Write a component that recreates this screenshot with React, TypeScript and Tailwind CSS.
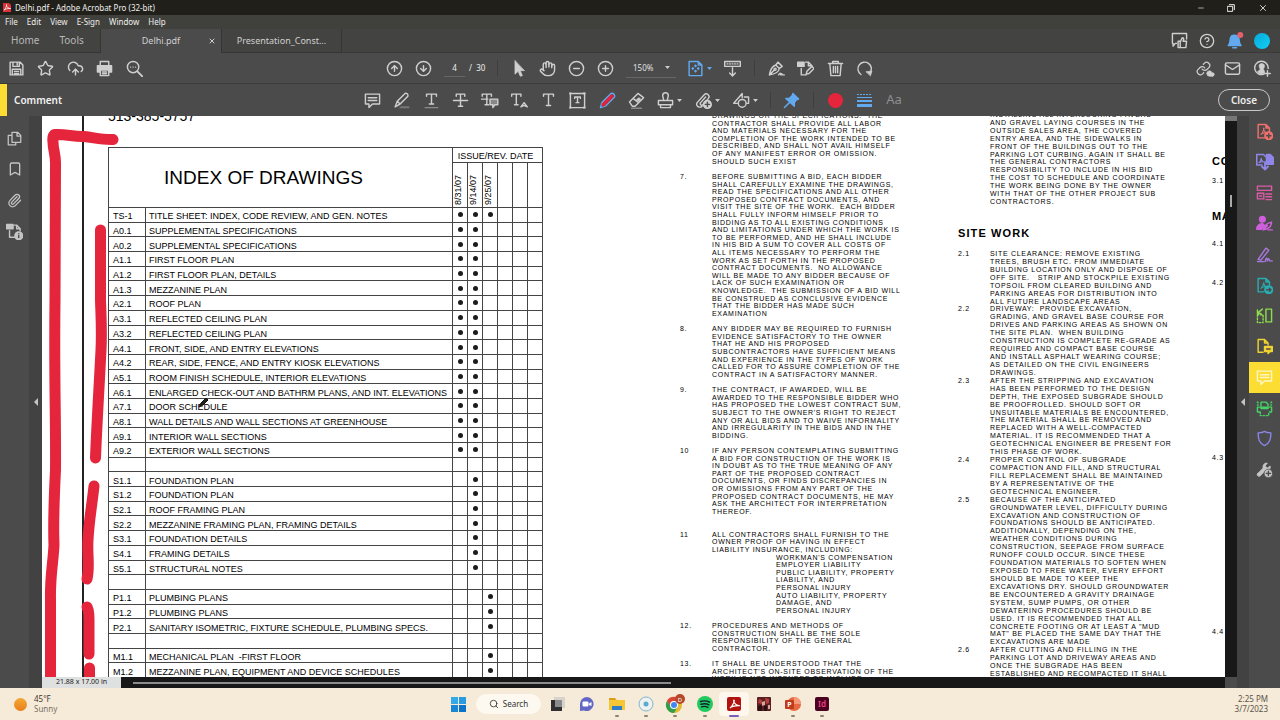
import type { ReactNode } from "react";
import {
  Bookmark, Cloud, CloudUpload, CircleArrowDown, CircleArrowUp, CircleHelp, CircleMinus, CirclePlus,
  Hand, Link, Mail, Minus, Paperclip, Search, Star, X,
} from "lucide-react";

/* ---------- icon helpers ---------- */

function Svg({ children, className = "size-[17px]", sw = 2 }: { children: ReactNode; className?: string; sw?: number }) {
  return (
    <svg viewBox="0 0 24 24" className={className} fill="none" stroke="currentColor" strokeWidth={sw} strokeLinecap="round" strokeLinejoin="round" aria-hidden="true">
      {children}
    </svg>
  );
}

const Caret = () => (
  <svg viewBox="0 0 8 5" className="h-[3px] w-[5px] shrink-0" fill="currentColor" aria-hidden="true"><path d="M0 0h8L4 5z" /></svg>
);
const PaneArrow = () => (
  <svg viewBox="0 0 4 8" className="h-[8px] w-[4px]" fill="currentColor" aria-hidden="true"><path d="M4 0v8L0 4z" /></svg>
);

const SaveIcon = () => (
  <Svg><path d="M3 3h14l4 4v14H3zM7 3v6h9V3M13 4v3M6 21v-8h12v8M9 16h6M9 19h6" /></Svg>
);
const PrintIcon = () => (
  <Svg><path d="M6 7V2h12v5" /><path d="M2 8h20v9h-4v-4H6v4H2z" fill="currentColor" /><path d="M6 14h12v8H6zM9 17h6M9 19.500h6" /></Svg>
);
const FindIcon = () => (
  <Svg><circle cx="10" cy="10" r="8" /><path d="M16 16l7 7" strokeWidth="2.6" /><path d="M6.500 10h.1M10 10h.1M13.500 10h.1" /></Svg>
);
const CursorIcon = () => (
  <Svg><path d="M7 1v19l4.500-4 3 7 3-1-3-7h5.500z" fill="currentColor" strokeWidth="1" /></Svg>
);
const FitIcon = () => (
  <Svg><path d="M3 2h13l5 5v15H3zM16 2v5h5" /><path d="M12 7v2.500M12 14.500V17M7 12h2.500M14.500 12H17M10.500 8.500L12 7l1.500 1.500M10.500 15.500L12 17l1.500-1.500M8.500 10.500L7 12l1.500 1.500M15.500 10.500L17 12l-1.500 1.500" strokeWidth="1.500" /></Svg>
);
const ScrollPageIcon = () => (
  <Svg><path d="M1 2h22v7H1z" /><path d="M4.500 5.500h15" strokeDasharray="1 2.500" /><path d="M12 11v11M8 18.500l4 4 4-4" /></Svg>
);
const FountainPenIcon = () => (
  <Svg><path d="M2 21C3 15 5 9 11 7l5 5c-1 6-6 8-14 9zM2 21l7-7M11 7l3-4 6 6-4 3" /><circle cx="10" cy="13" r="1.500" /><path d="M15 21c2-3 3-3 3 0 1-2 2-2 2 0h3" /></Svg>
);
const EditPageIcon = () => (
  <Svg><path d="M1 3h9v6H1z" fill="currentColor" /><path d="M12 3h4l5 5M6 12v9h7M16 3v5h5" /><path d="M13 20l1-4 7-7 3 3-7 7z" /></Svg>
);
const TrashIcon = () => (
  <Svg><path d="M2 5h20M8 5V2h8v3M4 5l1.500 17h13L20 5M9 9v9M12 9v9M15 9v9" /></Svg>
);
const RotateIcon = () => (
  <Svg><path d="M7 20.500A9.500 9.500 0 1 1 20 18" /><path d="M14.500 16.500l8-1-2 6.500z" fill="currentColor" strokeWidth="1" /></Svg>
);
const NoteIcon = () => (
  <Svg><path d="M2 3h20v14H12l-5 5v-5H2zM6 8h12M6 12h12" /></Svg>
);
const HighlightIcon = () => (
  <Svg><path d="M11 20h12v3H8z" fill="#777" stroke="none" /><path d="M3 21l3-8L17 2c2-1 5 1 4 4L10 17zM6 13l4 4M3 21l5-3" /></Svg>
);
const UnderlineIcon = () => (<Svg><path d="M5 6V3h14v3M12 3v14M9 17h6" /><path d="M3 22h18" stroke="#8a8a8a" /></Svg>);
const StrikeIcon = () => (<Svg><path d="M6 6V3h12v3M12 3v17M9 20h6M2 12h20" /></Svg>);
const ReplaceTextIcon = () => (
  <Svg className="h-[17px] w-[18px]"><path d="M1 6V3h13v3M7.500 3v15M5 18h5M0 10h9" /><path d="M12 10h11v8h-4l-3 4v-4h-4z" fill="#888" /></Svg>
);
const InsertTextIcon = () => (<Svg><path d="M1 6V3h13v3M7.500 3v15M5 18h5" /><path d="M14 21l4.500-6 4.500 6-4.500-2z" /></Svg>);
const TextIcon = () => (<Svg><path d="M5 6V3h14v3M12 3v16M9 19h6" /></Svg>);
const TextBoxIcon = () => (
  <Svg><path d="M2 2h20v20H2z" /><path d="M1 1h2v2H1zM21 1h2v2h-2zM1 21h2v2H1zM21 21h2v2h-2z" strokeWidth="1" /><path d="M8 9V7h8v2M12 7v8M10 15h4" /></Svg>
);
const PencilIcon = () => (
  <Svg><path d="M2 22l2-7L17 2c3-1 6 2 5 5L9 20z" stroke="#62a9ef" fill="#4b4b4b" /><path d="M6 18L18 6" stroke="#e3223a" strokeWidth="5" /></Svg>
);
const EraserIcon = () => (
  <Svg><path d="M2 14L14 2l8 6-12 12H6zM7 9l8 6" /><path d="M12 11l3-3 3 2-3 3z" fill="currentColor" strokeWidth="1" /><path d="M5 23h14" stroke="#888" /></Svg>
);
const StampIcon = () => (
  <Svg><path d="M9 12c1-3-1-4-1-7a4 4 0 0 1 8 0c0 3-2 4-1 7M2 12h20v6H2zM5 22h14M5 18v4M19 18v4" /></Svg>
);
const AttachIcon = () => (
  <Svg><path d="M10 20c-3 3-10 0-7-5L13 4c3-4 9 1 6 5L11 18c-2 2-5-1-3-3l7-8" /><circle cx="17.500" cy="17.500" r="5.500" fill="currentColor" /><path d="M17.500 14.500v6M14.500 17.500h6" stroke="#4b4b4b" /></Svg>
);
const ShapesIcon = () => (
  <Svg><path d="M7 16H1L13 2v6" /><circle cx="13" cy="16" r="5.500" /><path d="M16 7h6v9h-3" /></Svg>
);
const PinIcon = () => (
  <Svg><path d="M14 2l8 8-3 1-3 4v5L4 9h5l4-4zM9 15l-7 7" fill="currentColor" /></Svg>
);
const LinesIcon = () => (
  <svg viewBox="0 0 15 14" className="h-[14px] w-[15px]" aria-hidden="true">
    <path d="M0 1.500h15" stroke="#62a9ef" strokeWidth="1" strokeDasharray="2 1" />
    <path d="M0 4.500h15" stroke="#62a9ef" strokeWidth="1" /><path d="M0 8h15" stroke="#62a9ef" strokeWidth="2" /><path d="M0 12.500h15" stroke="#62a9ef" strokeWidth="3" />
  </svg>
);
const FeedbackIcon = () => (
  <Svg><path d="M8 16H6l-3 4v-4H2V2h20v8" /><path d="M10 13h3v9h-3zM13 14l3-6c3 0 2 3 1 5h5l-1 9h-8" fill="#434341" /></Svg>
);
const BellIcon = () => (
  <Svg className="size-[18px]"><path d="M3 18c3-2 2-6 3-10 1-5 9-5 11 0 1 4 0 8 3 10z" fill="#62a9ef" stroke="#62a9ef" /><path d="M9 21h5" stroke="#62a9ef" /><circle cx="19" cy="4" r="4" fill="#e5606b" stroke="none" /></Svg>
);
const PersonAddIcon = () => (
  <Svg><path d="M14 20a9.500 9.500 0 1 1 6-8" /><path d="M5 17c1-2 3-3 4-4-3-4-2-8 2-8s5 4 2 8c1 1 2 2 2 5-4 3-7 2-10-1z" fill="currentColor" strokeWidth="1" /><path d="M19 15v8M15 19h8" /></Svg>
);
const LinkCloudIcon = () => (
  <span className="relative flex"><Link className="size-[15px]" /><Cloud className="absolute -right-[4px] -bottom-[2px] size-[9px] fill-current" /></span>
);

/* side panes */
const PagesIcon = () => (<Svg className="size-[15px]"><path d="M8 2h9l5 5v11H8zM16 2v6h6M8 7H2v15h12v-4" /></Svg>);
const PageInfoIcon = () => (
  <Svg className="size-[17px]"><path d="M1 2h9v6H1z" fill="currentColor" /><path d="M12 3h3l5 5v3M5 11v9h7M15 3v5h5" /><circle cx="18" cy="18" r="5.500" fill="currentColor" /><path d="M18 17.500v3M18 15h.1" stroke="#4b4b4b" /></Svg>
);
const CreatePdfIcon = () => (
  <Svg><path d="M3 2h11l5 5v5M12 21H3V2M14 2v5h5" /><path d="M7 16c3-2 5-9 4-9s0 7 5 7-7-1-9 2z" strokeWidth="1.500" /><circle cx="18" cy="18" r="5.500" fill="currentColor" /><path d="M18 15v6M15 18h6" stroke="#4b4b4b" /></Svg>
);
const CombineIcon = () => (
  <Svg className="size-[18px]"><path d="M8 16H1V2h9l3 3" /><path d="M4 13c2-1 3-6 3-6s0 4 3 5c-3-1-4 0-6 1z" strokeWidth="1.500" /><path d="M14 2h5l4 4v9h-9z" fill="currentColor" /><path d="M12 12v9M8 18l4 4 4-4" strokeWidth="2.500" /></Svg>
);
const OrganizeIcon = () => (<Svg><path d="M2 3h20v6H2zM2 13h9v8H2zM14 14h8M14 18h8M14 22h8M5 17h3" /></Svg>);
const RequestSignIcon = () => (
  <Svg><circle cx="9" cy="6" r="4" fill="currentColor" /><path d="M1 20c0-6 4-7 8-8l3 3-4 5z" fill="currentColor" /><path d="M10 21c2-7 5-10 12-11 0 6-4 10-12 11zM10 21l6-6M17 21h6" /></Svg>
);
const FillSignIcon = () => (<Svg><path d="M3 19L14 3l4 3L7 20zM2 22h9M13 22c1-6 3-6 3-1 1-4 3-4 3 0h4" /></Svg>);
const ExportIcon = () => (
  <Svg><path d="M3 2h11l5 5v4M11 21H3V2M14 2v5h5" /><path d="M7 16c3-2 4-8 4-8s0 5 4 6c-4-1-6 0-8 2z" strokeWidth="1.500" /><circle cx="18" cy="18" r="5.500" fill="currentColor" /><path d="M15 18h6M19 16l2 2-2 2" stroke="#4b4b4b" /></Svg>
);
const ComparePagesIcon = () => (
  <Svg><path d="M14 3h8v18h-8z" /><path d="M2 11h8v11H2z" strokeDasharray="2 2.500" /><path d="M9 3L3 8M2 4v5h5" /></Svg>
);
const SendCommentsIcon = () => (
  <Svg><path d="M10 20H3V2h9l5 5v3M12 2v5h5" /><path d="M12 12h11v7h-3l-3 3v-3h-5z" fill="currentColor" /><path d="M15 15.500h5" stroke="#4b4b4b" /></Svg>
);
const ScanIcon = () => (
  <Svg><path d="M7 8V3h7l3 3v2M2 10h20v7h-3M5 17H2v-7M7 12h10" /><path d="M6 17v5h12v-5" strokeDasharray="2 2.500" /><path d="M2 3l1 1M22 3l-1 1M2 7h1M21 7h1" /></Svg>
);
const ShieldIcon = () => (<Svg><path d="M12 2c3 2 5 2 9 2 0 9-1 14-9 18C4 18 3 13 3 4c4 0 6 0 9-2z" /></Svg>);
const ToolsIcon = () => (
  <Svg><path d="M2 18l8-8c-1-4 2-8 6-7l-3 4 3 3 4-3c1 4-2 7-6 6l-8 8c-2 2-6-1-4-3z" fill="currentColor" strokeWidth="1" /><circle cx="17.500" cy="17.500" r="6" fill="currentColor" stroke="#4b4b4b" strokeWidth="1" /><path d="M17.500 14.500v6M14.500 17.500h6" stroke="#4b4b4b" /></Svg>
);

/* ---------- shared controls ---------- */

function IconButton({ label, children, className = "w-[29px]" }: { label: string; children: ReactNode; className?: string }) {
  return (
    <button type="button" aria-label={label} className={`flex h-6 shrink-0 items-center justify-center gap-[3px] ${className}`}>
      {children}
    </button>
  );
}

const Divider = () => <span className="h-[16px] w-px bg-[#3e3e3e]" />;

/* ---------- document data ---------- */

type IndexRow = [code: string, title: string, dots: string];
const indexRows: IndexRow[] = [
  ["TS-1", "TITLE SHEET: INDEX, CODE REVIEW, AND GEN. NOTES", "111"],
  ["A0.1", "SUPPLEMENTAL SPECIFICATIONS", "11"],
  ["A0.2", "SUPPLEMENTAL SPECIFICATIONS", "11"],
  ["A1.1", "FIRST FLOOR PLAN", "11"],
  ["A1.2", "FIRST FLOOR PLAN, DETAILS", "11"],
  ["A1.3", "MEZZANINE PLAN", "11"],
  ["A2.1", "ROOF PLAN", "11"],
  ["A3.1", "REFLECTED CEILING PLAN", "11"],
  ["A3.2", "REFLECTED CEILING PLAN", "11"],
  ["A4.1", "FRONT, SIDE, AND ENTRY ELEVATIONS", "11"],
  ["A4.2", "REAR, SIDE, FENCE, AND ENTRY KIOSK ELEVATIONS", "11"],
  ["A5.1", "ROOM FINISH SCHEDULE, INTERIOR ELEVATIONS", "11"],
  ["A6.1", "ENLARGED CHECK-OUT AND BATHRM PLANS, AND INT. ELEVATIONS", "11"],
  ["A7.1", "DOOR SCHEDULE", "11"],
  ["A8.1", "WALL DETAILS AND WALL SECTIONS AT GREENHOUSE", "11"],
  ["A9.1", "INTERIOR WALL SECTIONS", "11"],
  ["A9.2", "EXTERIOR WALL SECTIONS", "11"],
  ["", "", ""],
  ["S1.1", "FOUNDATION PLAN", "01"],
  ["S1.2", "FOUNDATION PLAN", "01"],
  ["S2.1", "ROOF FRAMING PLAN", "01"],
  ["S2.2", "MEZZANINE FRAMING PLAN, FRAMING DETAILS", "01"],
  ["S3.1", "FOUNDATION DETAILS", "01"],
  ["S4.1", "FRAMING DETAILS", "01"],
  ["S5.1", "STRUCTURAL NOTES", "01"],
  ["", "", ""],
  ["P1.1", "PLUMBING PLANS", "001"],
  ["P1.2", "PLUMBING PLANS", "001"],
  ["P2.1", "SANITARY ISOMETRIC, FIXTURE SCHEDULE, PLUMBING SPECS.", "001"],
  ["", "", ""],
  ["M1.1", "MECHANICAL PLAN  -FIRST FLOOR", "001"],
  ["M1.2", "MEZZANINE PLAN, EQUIPMENT AND DEVICE SCHEDULES", "001"],
];

type Clause = { no: string; text: string };

const bidClauses: Clause[] = [
  { no: "", text: `DRAWINGS OR THE SPECIFICATIONS.  THE
CONTRACTOR SHALL PROVIDE ALL LABOR
AND MATERIALS NECESSARY FOR THE
COMPLETION OF THE WORK INTENDED TO BE
DESCRIBED, AND SHALL NOT AVAIL HIMSELF
OF ANY MANIFEST ERROR OR OMISSION.
SHOULD SUCH EXIST
` },
  { no: "7.", text: `BEFORE SUBMITTING A BID, EACH BIDDER
SHALL CAREFULLY EXAMINE THE DRAWINGS,
READ THE SPECIFICATIONS AND ALL OTHER
PROPOSED CONTRACT DOCUMENTS, AND
VISIT THE SITE OF THE WORK.  EACH BIDDER
SHALL FULLY INFORM HIMSELF PRIOR TO
BIDDING AS TO ALL EXISTING CONDITIONS
AND LIMITATIONS UNDER WHICH THE WORK IS
TO BE PERFORMED, AND HE SHALL INCLUDE
IN HIS BID A SUM TO COVER ALL COSTS OF
ALL ITEMS NECESSARY TO PERFORM THE
WORK AS SET FORTH IN THE PROPOSED
CONTRACT DOCUMENTS.  NO ALLOWANCE
WILL BE MADE TO ANY BIDDER BECAUSE OF
LACK OF SUCH EXAMINATION OR
KNOWLEDGE.  THE SUBMISSION OF A BID WILL
BE CONSTRUED AS CONCLUSIVE EVIDENCE
THAT THE BIDDER HAS MADE SUCH
EXAMINATION
` },
  { no: "8.", text: `ANY BIDDER MAY BE REQUIRED TO FURNISH
EVIDENCE SATISFACTORY TO THE OWNER
THAT HE AND HIS PROPOSED
SUBCONTRACTORS HAVE SUFFICIENT MEANS
AND EXPERIENCE IN THE TYPES OF WORK
CALLED FOR TO ASSURE COMPLETION OF THE
CONTRACT IN A SATISFACTORY MANNER.
` },
  { no: "9.", text: `THE CONTRACT, IF AWARDED, WILL BE
AWARDED TO THE RESPONSIBLE BIDDER WHO
HAS PROPOSED THE LOWEST CONTRACT SUM,
SUBJECT TO THE OWNER'S RIGHT TO REJECT
ANY OR ALL BIDS AND TO WAIVE INFORMALITY
AND IRREGULARITY IN THE BIDS AND IN THE
BIDDING.
` },
  { no: "10", text: `IF ANY PERSON CONTEMPLATING SUBMITTING
A BID FOR CONSTRUCTION OF THE WORK IS
IN DOUBT AS TO THE TRUE MEANING OF ANY
PART OF THE PROPOSED CONTRACT
DOCUMENTS, OR FINDS DISCREPANCIES IN
OR OMISSIONS FROM ANY PART OF THE
PROPOSED CONTRACT DOCUMENTS, HE MAY
ASK THE ARCHITECT FOR INTERPRETATION
THEREOF.

` },
  { no: "11", text: `ALL CONTRACTORS SHALL FURNISH TO THE
OWNER PROOF OF HAVING IN EFFECT
LIABILITY INSURANCE, INCLUDING:
\tWORKMAN'S COMPENSATION
\tEMPLOYER LIABILITY
\tPUBLIC LIABILITY, PROPERTY
\tLIABILITY, AND
\tPERSONAL INJURY
\tAUTO LIABILITY, PROPERTY
\tDAMAGE, AND
\tPERSONAL INJURY
` },
  { no: "12.", text: `PROCEDURES AND METHODS OF
CONSTRUCTION SHALL BE THE SOLE
RESPONSIBILITY OF THE GENERAL
CONTRACTOR.
` },
  { no: "13.", text: `IT SHALL BE UNDERSTOOD THAT THE
ARCHITECT'S ON-SITE OBSERVATION OF THE
WORK IS NOT INTENDED TO INCLUDE` },
];

const pavingClauses: Clause[] = [
  { no: "", text: `INSTALLING ALL INTERLOCKING PAVERS
AND GRAVEL LAYING COURSES IN THE
OUTSIDE SALES AREA, THE COVERED
ENTRY AREA, AND THE SIDEWALKS IN
FRONT OF THE BUILDINGS OUT TO THE
PARKING LOT CURBING. AGAIN IT SHALL BE
THE GENERAL CONTRACTORS
RESPONSIBILITY TO INCLUDE IN HIS BID
THE COST TO SCHEDULE AND COORDINATE
THE WORK BEING DONE BY THE OWNER
WITH THAT OF THE OTHER PROJECT SUB
CONTRACTORS.` },
];

const siteClauses: Clause[] = [
  { no: "2.1", text: `SITE CLEARANCE: REMOVE EXISTING
TREES, BRUSH ETC. FROM IMMEDIATE
BUILDING LOCATION ONLY AND DISPOSE OF
OFF SITE.   STRIP AND STOCKPILE EXISTING
TOPSOIL FROM CLEARED BUILDING AND
PARKING AREAS FOR DISTRIBUTION INTO
ALL FUTURE LANDSCAPE AREAS` },
  { no: "2.2", text: `DRIVEWAY:  PROVIDE EXCAVATION,
GRADING, AND GRAVEL BASE COURSE FOR
DRIVES AND PARKING AREAS AS SHOWN ON
THE SITE PLAN.  WHEN BUILDING
CONSTRUCTION IS COMPLETE RE-GRADE AS
REQUIRED AND COMPACT BASE COURSE
AND INSTALL ASPHALT WEARING COURSE;
AS DETAILED ON THE CIVIL ENGINEERS
DRAWINGS.` },
  { no: "2.3", text: `AFTER THE STRIPPING AND EXCAVATION
HAS BEEN PERFORMED TO THE DESIGN
DEPTH, THE EXPOSED SUBGRADE SHOULD
BE PROOFROLLED. SHOULD SOFT OR
UNSUITABLE MATERIALS BE ENCOUNTERED,
THE MATERIAL SHALL BE REMOVED AND
REPLACED WITH A WELL-COMPACTED
MATERIAL. IT IS RECOMMENDED THAT A
GEOTECHNICAL ENGINEER BE PRESENT FOR
THIS PHASE OF WORK.` },
  { no: "2.4", text: `PROPER CONTROL OF SUBGRADE
COMPACTION AND FILL, AND STRUCTURAL
FILL REPLACEMENT SHALL BE MAINTAINED
BY A REPRESENTATIVE OF THE
GEOTECHNICAL ENGINEER.` },
  { no: "2.5", text: `BECAUSE OF THE ANTICIPATED
GROUNDWATER LEVEL, DIFFICULTY DURING
EXCAVATION AND CONSTRUCTION OF
FOUNDATIONS SHOULD BE ANTICIPATED.
ADDITIONALLY, DEPENDING ON THE,
WEATHER CONDITIONS DURING
CONSTRUCTION, SEEPAGE FROM SURFACE
RUNOFF COULD OCCUR. SINCE THESE
FOUNDATION MATERIALS TO SOFTEN WHEN
EXPOSED TO FREE WATER, EVERY EFFORT
SHOULD BE MADE TO KEEP THE
EXCAVATIONS DRY. SHOULD GROUNDWATER
BE ENCOUNTERED A GRAVITY DRAINAGE
SYSTEM, SUMP PUMPS, OR OTHER
DEWATERING PROCEDURES SHOULD BE
USED. IT IS RECOMMENDED THAT ALL
CONCRETE FOOTING OR AT LEAST A "MUD
MAT" BE PLACED THE SAME DAY THAT THE
EXCAVATIONS ARE MADE` },
  { no: "2.6", text: `AFTER CUTTING AND FILLING IN THE
PARKING LOT AND DRIVEWAY AREAS AND
ONCE THE SUBGRADE HAS BEEN
ESTABLISHED AND RECOMPACTED IT SHALL` },
];

function ClauseList({ clauses, className }: { clauses: Clause[]; className: string }) {
  return (
    <ol className={`grid auto-rows-fr text-[7px] leading-[7px] tracking-widest whitespace-pre text-black ${className}`}>
      {clauses.map(({ no, text }, i) => {
        const lines = text.split("\n");
        return (
          <li key={i} className="flex" style={{ gridRow: `span ${lines.length}` }}>
            <span className="w-8 shrink-0">{no}</span>
            <span className="grid auto-rows-fr">
              {lines.map((line, j) => (
                <span key={j} className={line.startsWith("\t") ? "pl-16" : ""}>{line.trimStart()}</span>
              ))}
            </span>
          </li>
        );
      })}
    </ol>
  );
}

function DrawingIndex() {
  const line = "border border-[#444]";
  return (
    <table className="h-[531px] w-[435px] table-fixed border-collapse text-[9px] leading-[10px] text-black">
      <colgroup>
        <col className="w-[37px]" /><col />
        {[0, 1, 2, 3, 4, 5].map((c) => <col key={c} className="w-[15px]" />)}
      </colgroup>
      <thead>
        <tr className="h-[15px]">
          <th colSpan={2} rowSpan={2} className={`${line} pr-[34px] text-center text-[19px] leading-6 font-normal`}>INDEX OF DRAWINGS</th>
          <th colSpan={6} className={`${line} p-0 pt-[2px] pr-[4px] font-normal`}>ISSUE/REV. DATE</th>
        </tr>
        <tr className="h-[45px]">
          {["8/31/07", "9/14/07", "9/25/07", "", "", ""].map((d, i) => (
            <th key={i} scope="col" className={`${line} p-0 pb-[2px] align-bottom font-normal`}>
              <span className="mx-auto block w-[10px] rotate-180 [writing-mode:vertical-rl]">{d}</span>
            </th>
          ))}
        </tr>
      </thead>
      <tbody>
        {indexRows.map(([code, title, dots], r) => (
          <tr key={r}>
            <td className={`${line} p-0 pt-[3px] pl-1`}>{code || "\u00a0"}</td>
            <td className={`${line} p-0 pt-[3px] pl-[3px] whitespace-pre`}>{title}</td>
            {[0, 1, 2, 3, 4, 5].map((c) => (
              <td key={c} className={`${line} p-0`}>
                {dots[c] === "1" && <span className="mx-auto block size-[5px] rounded-full bg-[#1c1c1c]" />}
              </td>
            ))}
          </tr>
        ))}
      </tbody>
    </table>
  );
}

function Markup() {
  return (
    <svg className="pointer-events-none absolute top-0 left-0" width="170" height="561" viewBox="42 116 170 561" fill="none" aria-hidden="true">
      <g stroke="#e4253c" strokeWidth="11" strokeLinecap="round" strokeLinejoin="round">
        <path d="M113 139.500C103 140 96 138 84 136.500C74 137 66 134 56 134.500Q52 134 53 142C53 150 56 155 55.500 165L55 300C54 380 56 420 55.500 470C54 500 53 520 54 545C53 565 50 575 50.500 600L50.500 690" />
        <path d="M100.500 230V300C101 318 102 330 101 350C99 390 97 420 95.500 458" />
        <path d="M94 486C92 505 89 520 88 540C87 556 90 566 87 579" />
        <path d="M87 607Q89 609 89 620V654" />
        <path d="M89.500 668V690" />
      </g>
      <path d="M199 407l2-4 5-5 2 2-5 5z" fill="#222" stroke="#111" strokeWidth="1" />
    </svg>
  );
}

function Sheet() {
  return (
    <div className="relative flex min-h-0 flex-1 overflow-hidden bg-white">
      <div className="w-[42px] shrink-0 border-r-2 border-[#222]" />
      <div className="ml-6 shrink-0">
        <p className="-mt-[8px] h-[39px] text-[14px] leading-[16px] text-black">513-385-5757</p>
        <DrawingIndex />
      </div>
      <ClauseList clauses={bidClauses} className="-mt-1 ml-[137px] h-[571px] w-[278px] shrink-0" />
      <div className="-mt-[5px] w-[254px] shrink-0">
        <ClauseList clauses={pavingClauses} className="h-[95px]" />
        <h2 className="flex h-[44px] items-center pt-[10px] text-[11px] font-bold tracking-widest text-black">SITE WORK</h2>
        <ClauseList clauses={siteClauses} className="h-[428px]" />
      </div>
      <div className="flex shrink-0 flex-col pt-[38px] text-[7px] leading-[8px] tracking-widest text-black">
        <b className="text-[11px] leading-[14px] text-black">CO</b>
        <span className="mt-[9px]">3.1</span>
        <b className="mt-[24px] text-[11px] leading-[14px] text-black">MA</b>
        <span className="mt-[17px]">4.1</span>
        <span className="mt-[31px]">4.2</span>
        <span className="mt-[167px]">4.3</span>
        <span className="mt-[166px]">4.4</span>
      </div>
      <Markup />
    </div>
  );
}

/* ---------- application chrome ---------- */

function TitleBar() {
  return (
    <div className="flex h-[15px] items-center bg-[#201f1a] pl-[3px] text-[8px] text-[#eee]">
      <svg viewBox="0 0 16 18" className="h-[9px] w-[8px]" aria-hidden="true"><path d="M0 0h12l4 4v14H0z" fill="#d8323a" /><path d="M2 14c4-2 6-11 5-11s1 8 7 8-7-1-12 3z" stroke="#fff" strokeWidth="1.5" fill="none" /></svg>
      <span className="ml-[4px]">Delhi.pdf - Adobe Acrobat Pro (32-bit)</span>
      <div className="ml-auto flex">
        <IconButton label="Minimize" className="w-[30px]"><Minus className="size-[8px]" /></IconButton>
        <IconButton label="Restore" className="w-[30px]">
          <Svg className="size-[8px]" sw={3}><path d="M2 7h15v15H2zM7 2h15v15" /></Svg>
        </IconButton>
        <IconButton label="Close window" className="w-[34px]"><X className="size-[10px]" /></IconButton>
      </div>
    </div>
  );
}

function MenuBar() {
  return (
    <nav className="flex h-[14px] items-center gap-[9px] bg-[#40403c] pl-[5px] text-[8px] text-[#eee]">
      {["File", "Edit", "View", "E-Sign", "Window", "Help"].map((m) => <button key={m} type="button">{m}</button>)}
    </nav>
  );
}

function TabBar() {
  return (
    <div className="flex h-6 bg-[#434341] text-[9px] text-[#d0d0d0]">
      <div className="flex w-[101px] items-center gap-5 border-r border-b border-[#353533] pl-[11px] text-[10px] text-[#b8b8b8]">
        <button type="button">Home</button>
        <button type="button">Tools</button>
      </div>
      <div className="relative flex w-[120px] items-center justify-center bg-[#4b4b4b]">
        <button type="button">Delhi.pdf</button>
        <button type="button" aria-label="Close tab" className="absolute right-[5px]"><X className="size-[8px]" strokeWidth={3} /></button>
      </div>
      <div className="flex w-[121px] items-center justify-center border-r border-b border-l border-[#353533]">
        <button type="button">Presentation_Const...</button>
      </div>
      <div className="flex flex-1 items-center justify-end border-b border-[#3a3a38] pr-1">
        <IconButton label="Feedback" className="w-[28px]"><FeedbackIcon /></IconButton>
        <IconButton label="Help" className="w-[28px]"><CircleHelp className="size-[16px]" /></IconButton>
        <IconButton label="Notifications" className="w-[27px]"><BellIcon /></IconButton>
        <IconButton label="Account" className="w-[28px]"><span className="size-[16px] rounded-full bg-linear-to-br from-[#08a9d8] to-[#10d0f5]" /></IconButton>
      </div>
    </div>
  );
}

function MainToolbar() {
  return (
    <div className="flex h-[31px] items-center border-b border-[#3c3c3c] bg-[#4b4b4b] text-[#cfcfcf]">
      <div className="flex w-[380px] items-center pl-[2px]">
        <IconButton label="Save"><SaveIcon /></IconButton>
        <IconButton label="Star"><Star className="size-[17px]" /></IconButton>
        <IconButton label="Upload" className="w-[30px]"><CloudUpload className="size-[17px]" /></IconButton>
        <IconButton label="Print"><PrintIcon /></IconButton>
        <IconButton label="Find" className="w-[30px]"><FindIcon /></IconButton>
      </div>
      <IconButton label="Previous page"><CircleArrowUp className="size-[17px]" /></IconButton>
      <IconButton label="Next page"><CircleArrowDown className="size-[17px]" /></IconButton>
      <input aria-label="Page number" defaultValue="4" className="ml-[6px] h-[18px] w-[21px] border-b border-[#666] bg-transparent text-center text-[8px] text-[#eee]" />
      <span className="ml-[4px] w-[28px] text-[8px] text-[#eee]">/&nbsp; 30</span>
      <Divider />
      <div className="ml-[6px] flex">
        <IconButton label="Select"><CursorIcon /></IconButton>
        <IconButton label="Pan"><Hand className="size-[17px]" /></IconButton>
        <IconButton label="Zoom out"><CircleMinus className="size-[17px]" /></IconButton>
        <IconButton label="Zoom in"><CirclePlus className="size-[17px]" /></IconButton>
      </div>
      <span className="relative ml-[6px] flex w-[50px] items-center border-b border-[#666]">
        <select aria-label="Zoom level" className="h-[18px] w-full appearance-none bg-transparent pl-[7px] text-[8px] text-[#e0e0e0]"><option>150%</option></select>
        <span className="pointer-events-none absolute right-[6px]"><Caret /></span>
      </span>
      <IconButton label="Fit page" className="ml-[8px] w-[30px] text-[#62a9ef]"><FitIcon /><Caret /></IconButton>
      <IconButton label="Scrolling mode" className="ml-[4px] w-[29px]"><ScrollPageIcon /></IconButton>
      <span className="mr-[7px] ml-[7px] flex"><Divider /></span>
      <IconButton label="Sign"><FountainPenIcon /></IconButton>
      <IconButton label="Edit page"><EditPageIcon /></IconButton>
      <IconButton label="Delete" className="w-[30px]"><TrashIcon /></IconButton>
      <IconButton label="Rotate" className="w-[28px]"><RotateIcon /></IconButton>
      <div className="ml-auto flex pr-[3px]">
        <IconButton label="Share link"><LinkCloudIcon /></IconButton>
        <IconButton label="Email"><Mail className="size-[17px]" /></IconButton>
        <IconButton label="Share with people" className="w-[30px]"><PersonAddIcon /></IconButton>
      </div>
    </div>
  );
}

function CommentToolbar() {
  return (
    <div className="flex h-8 items-center bg-[#4b4b4b] text-[#cfcfcf]">
      <div className="flex w-[358px] items-center self-stretch">
        <span className="w-[7px] self-stretch bg-[#fbdd34]" />
        <h1 className="ml-[7px] text-[10px] font-semibold text-[#f2f2f2]">Comment</h1>
      </div>
      <div className="flex w-[293px]">
        <IconButton label="Sticky note" className="flex-1"><NoteIcon /></IconButton>
        <IconButton label="Highlight" className="flex-1"><HighlightIcon /></IconButton>
        <IconButton label="Underline" className="flex-1"><UnderlineIcon /></IconButton>
        <IconButton label="Strikethrough" className="flex-1"><StrikeIcon /></IconButton>
        <IconButton label="Replace text" className="flex-1"><ReplaceTextIcon /></IconButton>
        <IconButton label="Insert text" className="flex-1"><InsertTextIcon /></IconButton>
        <IconButton label="Add text" className="flex-1"><TextIcon /></IconButton>
        <IconButton label="Text box" className="flex-1"><TextBoxIcon /></IconButton>
        <IconButton label="Draw" className="flex-1"><PencilIcon /></IconButton>
        <IconButton label="Erase" className="flex-1"><EraserIcon /></IconButton>
      </div>
      <div className="flex w-[113px]">
        <IconButton label="Stamp" className="flex-1"><StampIcon /><Caret /></IconButton>
        <IconButton label="Attach" className="flex-1"><AttachIcon /><Caret /></IconButton>
        <IconButton label="Shapes" className="flex-1"><ShapesIcon /><Caret /></IconButton>
      </div>
      <span className="mr-[6px] ml-[6px] flex"><Divider /></span>
      <IconButton label="Keep tool selected" className="w-[29px] text-[#62a9ef]"><PinIcon /></IconButton>
      <span className="mx-[7px] flex"><Divider /></span>
      <IconButton label="Color"><span className="size-[15px] rounded-full bg-[#e4253c]" /></IconButton>
      <IconButton label="Line thickness"><LinesIcon /></IconButton>
      <IconButton label="Text properties" className="w-[30px] text-[13px] text-[#8e8e8e]">Aa</IconButton>
      <button type="button" className="mr-[10px] ml-auto h-[22px] w-[52px] rounded-full border border-[#c8c8c8] text-[10px] font-semibold text-[#eee]">Close</button>
    </div>
  );
}

function LeftRail() {
  return (
    <aside className="flex shrink-0 text-[#c4c4c4]">
      <div className="flex w-[29px] flex-col items-center gap-[7px] bg-[#4b4b4b] pt-[10px]">
        <IconButton label="Pages"><PagesIcon /></IconButton>
        <IconButton label="Bookmarks"><Bookmark className="size-[16px]" /></IconButton>
        <IconButton label="Attachments"><Paperclip className="size-[15px]" /></IconButton>
        <IconButton label="Page info"><PageInfoIcon /></IconButton>
      </div>
      <button type="button" aria-label="Collapse pane" className="flex w-[13px] items-center justify-center bg-[#424242]"><PaneArrow /></button>
    </aside>
  );
}

const tools: [string, ReactNode, string][] = [
  ["Create PDF", <CreatePdfIcon />, "text-[#f0706c]"],
  ["Combine files", <CombineIcon />, "text-[#8f86e8]"],
  ["Organize pages", <OrganizeIcon />, "text-[#dc5ba6]"],
  ["Request signatures", <RequestSignIcon />, "text-[#cf5fdc]"],
  ["Fill and sign", <FillSignIcon />, "text-[#a878dc]"],
  ["Export PDF", <ExportIcon />, "text-[#28adb4]"],
  ["Compare", <ComparePagesIcon />, "text-[#8edc4c]"],
  ["Send for comments", <SendCommentsIcon />, "text-[#f0d330]"],
  ["Comment", <NoteIcon />, "bg-[#fbdd34] text-[#fff6c2]"],
  ["Scan", <ScanIcon />, "text-[#44d264]"],
  ["Protect", <ShieldIcon />, "text-[#8785e6]"],
  ["More tools", <ToolsIcon />, "text-[#c4c4c4]"],
];

function RightRail() {
  return (
    <aside className="flex shrink-0">
      <button type="button" aria-label="Collapse tools" className="flex w-[12px] items-center justify-center bg-[#424242] text-[#c4c4c4]"><PaneArrow /></button>
      <div className="w-[31px] bg-[#4b4b4b]">
        <div className="flex h-[369px] flex-col">
          {tools.map(([label, icon, tone]) => (
            <button key={label} type="button" aria-label={label} className={`flex flex-1 items-center justify-center ${tone}`}>{icon}</button>
          ))}
        </div>
      </div>
    </aside>
  );
}

function TaskApp({ label, running = false, active = false, children }: { label: string; running?: boolean; active?: boolean; children: ReactNode }) {
  return (
    <button type="button" aria-label={label} className={`relative flex h-[24px] flex-1 items-center justify-center rounded ${active ? "bg-[#fdf7ee]" : ""}`}>
      {children}
      {active && <span className="absolute -bottom-px h-[2px] w-[10px] rounded-full bg-[#7a5fc0]" />}
      {running && <span className="absolute -bottom-px h-[2px] w-[4px] rounded-full bg-[#8b8378]" />}
    </button>
  );
}

function Taskbar() {
  const box = "size-[16px]";
  return (
    <footer className="flex h-8 items-center bg-[#f6ead8] text-[8px] leading-[10px] text-[#3d3831]">
      <div className="flex w-[444px] items-center gap-[7px] pl-[14px]">
        <span className="size-[13px] rounded-full bg-linear-to-b from-[#f4a836] to-[#e97f17]" />
        <p>45°F<br /><span className="text-[#7a7266]">Sunny</span></p>
      </div>
      <button type="button" aria-label="Start" className="grid h-6 w-[29px] grid-cols-[7px_7px] grid-rows-[7px_7px] place-content-center gap-px">
        <i className="bg-[#33a9e8]" /><i className="bg-[#2a9be0]" /><i className="bg-[#1a87d4]" /><i className="bg-[#0b74c8]" />
      </button>
      <button type="button" className="ml-[3px] flex h-5 w-[65px] items-center justify-center gap-1 rounded-full bg-[#fdf8f0] text-[8px] text-[#333]">
        <Search className="size-[10px]" />Search
      </button>
      <div className="ml-[2px] flex w-[294px]">
        <TaskApp label="Task view"><svg viewBox="0 0 16 16" className={box}><path d="M4 1h11v11H4z" fill="#d6d3cc" /><path d="M1 4h11v11H1z" fill="#2f2f2f" /><path d="M5 4h7v7H5z" fill="#8b8b8b" /></svg></TaskApp>
        <TaskApp label="Chat"><svg viewBox="0 0 16 16" className={box}><path d="M8 1a7 7 0 1 1-3 13.500L1 15V8a7 7 0 0 1 7-7z" fill="#6266c4" /><rect x="3.500" y="5.500" width="6" height="5" rx="1" fill="#fff" /><path d="M10 7.500l2.500-1.500v4L10 9z" fill="#fff" /></svg></TaskApp>
        <TaskApp label="File Explorer" running><svg viewBox="0 0 16 16" className={box}><path d="M0 2h6l2 2h8v10H0z" fill="#f7c733" /><path d="M0 2h6l1 2H0z" fill="#dc9d1d" /><path d="M3 10h10v4H3z" fill="#2f7fc9" /></svg></TaskApp>
        <TaskApp label="Recorder" running><svg viewBox="0 0 16 16" className={box}><circle cx="8" cy="8" r="7" fill="#eef1ee" stroke="#7fb6cf" /><circle cx="8" cy="8" r="2.500" fill="#58acd2" /></svg></TaskApp>
        <TaskApp label="Chrome" running>
          <svg viewBox="0 0 20 20" className="size-[20px]"><circle cx="9" cy="11" r="8" fill="#e5b92e" /><path d="M2 7a8 8 0 0 1 14 0H9a4 4 0 0 0-3.500 6z" fill="#dc4437" /><path d="M2 7a8 8 0 0 0 7 12l3.500-6H6z" fill="#2f9e4f" /><circle cx="9" cy="11" r="4" fill="#fff" /><circle cx="9" cy="11" r="3" fill="#4285f4" /><circle cx="15" cy="5" r="5" fill="#b5482a" /><text x="15" y="7.500" fontSize="6" textAnchor="middle" fill="#fff">D</text></svg>
        </TaskApp>
        <TaskApp label="Spotify" running><svg viewBox="0 0 16 16" className={box}><circle cx="8" cy="8" r="8" fill="#22c95e" /><path d="M3.500 5.500q5-1.500 9 .7M4 8.200q4.500-1.200 8 .6M4.500 10.800q3.500-1 6.500.5" stroke="#123" strokeWidth="1.400" fill="none" strokeLinecap="round" /></svg></TaskApp>
        <TaskApp label="Acrobat" active><svg viewBox="0 0 16 16" className={box}><rect x="1" y="1" width="14" height="14" rx="2" fill="#b3130f" /><path d="M4 12c3-2 5-8 4-8s0 5 4.500 5.500S6 9 4 12z" stroke="#fff" strokeWidth="1.200" fill="none" /></svg></TaskApp>
        <TaskApp label="Game"><svg viewBox="0 0 16 16" className={box}><rect x="1" y="1" width="14" height="14" rx="1" fill="#5d1f22" /><path d="M3 3l3 1v4L2 7zM9 2l4 1v4l-3 1z" fill="#b4403e" /><path d="M2 10l4-1v6H2zM8 9l3 1v5H8z" fill="#2a1113" /><path d="M6 6l3-1v4l-3 1zM12 9h2v4h-2z" fill="#d6a79b" /></svg></TaskApp>
        <TaskApp label="PowerPoint" running><svg viewBox="0 0 16 16" className={box}><circle cx="9" cy="8" r="7" fill="#e56a43" /><path d="M9 1a7 7 0 0 1 7 7H9z" fill="#f39a7a" /><rect x="0" y="4" width="9" height="9" rx="1" fill="#c13b1b" /><text x="4.500" y="11" fontSize="7" fontWeight="700" textAnchor="middle" fill="#fff">P</text></svg></TaskApp>
        <TaskApp label="InDesign" running><svg viewBox="0 0 16 16" className={box}><rect x="1" y="1" width="14" height="14" rx="2" fill="#49021f" /><text x="8" y="11" fontSize="8" fontWeight="600" textAnchor="middle" fill="#f2418a">Id</text></svg></TaskApp>
      </div>
      <p className="ml-auto pr-3 text-right text-[#5b554c]">2:25 PM<br />3/7/2023</p>
    </footer>
  );
}

export default function App() {
  return (
    <div className="flex h-screen flex-col overflow-hidden bg-[#4b4b4b] font-['Noto_Sans','Open_Sans',sans-serif]">
      <header>
        <TitleBar />
        <MenuBar />
        <TabBar />
        <MainToolbar />
        <CommentToolbar />
      </header>
      <div className="flex min-h-0 flex-1">
        <LeftRail />
        <main className="flex min-w-0 flex-1 flex-col bg-[#181818] font-['Liberation_Sans',Arial,sans-serif]">
          <div className="flex min-h-0 flex-1">
            <Sheet />
            <div className="flex w-[12px] shrink-0 flex-col items-center bg-[#181818]">
              <span className="h-[5px] w-full bg-[#777]" />
              <span className="mt-[74px] h-[12px] w-[2px] bg-[#aaa]" />
            </div>
          </div>
          <div className="flex h-[11px] items-center">
            <span className="flex h-full w-[79px] items-center justify-center bg-[#dfe0e0] font-['Noto_Sans',sans-serif] text-[7px] text-[#222]">21.88 x 17.00 in</span>
            <span className="ml-3 h-[2px] w-[45%] bg-[#8c8c8c]" />
            <span className="ml-auto h-full w-[12px] bg-[#4b4b4b]" />
          </div>
        </main>
        <RightRail />
      </div>
      <Taskbar />
    </div>
  );
}
